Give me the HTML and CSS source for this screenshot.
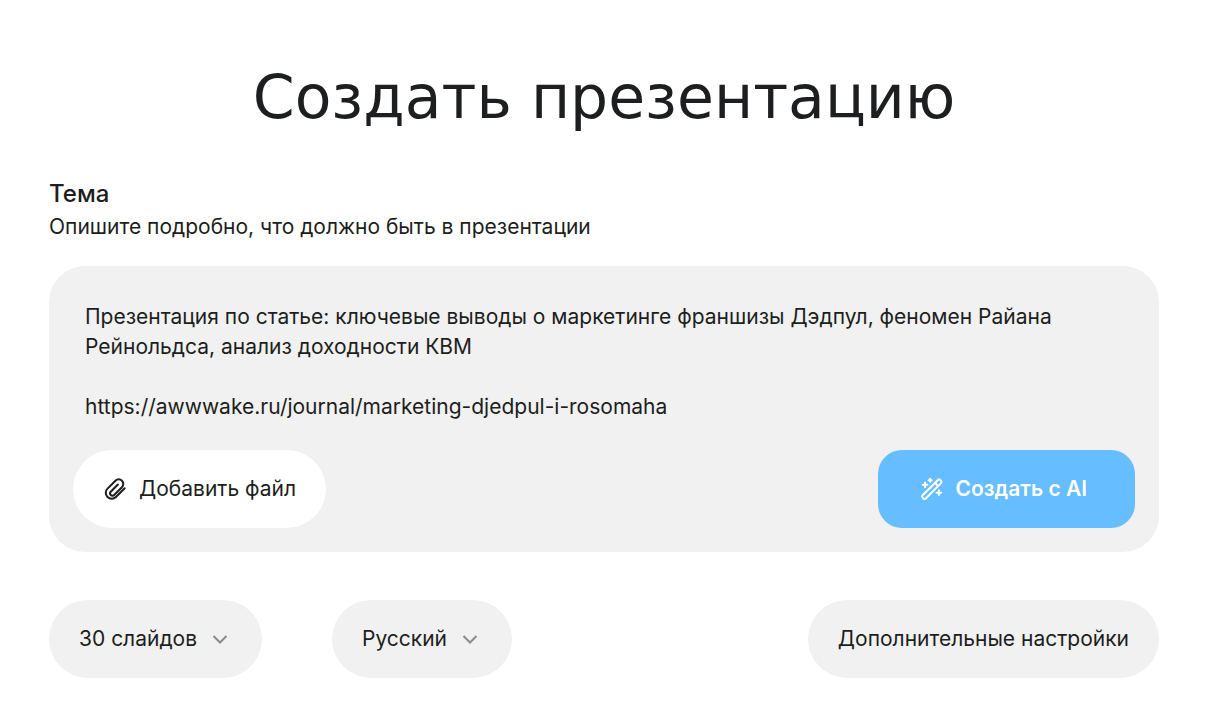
FILE: index.html
```html
<!DOCTYPE html>
<html lang="ru">
<head>
    <meta charset="UTF-8">
    <meta name="viewport" content="width=device-width, initial-scale=1.0">
    <title>Создать презентацию</title>
    <link rel="stylesheet" href="styles.css">
</head>
<body>
    <main class="page">
        <h1>Создать презентацию</h1>

        <form class="create-form">
            <label class="topic-label" for="topic">Тема</label>
            <p class="topic-hint" id="topic-hint">Опишите подробно, что должно быть в презентации</p>

            <div class="prompt">
                <textarea id="topic" name="topic" rows="4" aria-describedby="topic-hint" spellcheck="false">Презентация по статье: ключевые выводы о маркетинге франшизы Дэдпул, феномен Райана Рейнольдса, анализ доходности КВМ

https://awwwake.ru/journal/marketing-djedpul-i-rosomaha</textarea>
                <div class="prompt-actions">
                    <button type="button" class="btn btn-file">
                        <svg class="icon" viewBox="-1 -1 26 26" aria-hidden="true">
                            <path d="M22.5 11.2l-9.500 9.500a6.400 6.400 0 0 1-9.100 0 6.400 6.400 0 0 1 0-9.100l8.600-8.600a4.900 4.900 0 0 1 7 0 4.900 4.900 0 0 1 0 7l-8.500 8.500a2.500 2.500 0 0 1-3.600-3.600l7.700-7.700"/>
                        </svg>
                        Добавить файл
                    </button>
                    <button type="submit" class="btn btn-create">
                        <svg class="icon" viewBox="-1 -1 26 26" aria-hidden="true">
                            <path d="M1.8 18.8L18.400 2.200a1.700 1.700 0 0 1 2.400 0l1 1a1.700 1.700 0 0 1 0 2.400L5.200 22.200a1.700 1.700 0 0 1-2.400 0l-1-1a1.700 1.700 0 0 1 0-2.400z"/>
                            <path d="M15.400 5.600l3 3M4.500 5v5M2 7.500h5M10 .8v3.400M8.300 2.500h3.400M19.500 13.500v5M17 16h5"/>
                        </svg>
                        Создать с AI
                    </button>
                </div>
            </div>

            <div class="options">
                <div class="select">
                    <select name="slides" aria-label="Количество слайдов">
                        <option>30 слайдов</option>
                    </select>
                    <svg class="chevron" viewBox="0 0 16 16" aria-hidden="true"><path d="M1.500 5l6.500 6.500L14.500 5"/></svg>
                </div>
                <div class="select">
                    <select name="language" aria-label="Язык">
                        <option>Русский</option>
                    </select>
                    <svg class="chevron" viewBox="0 0 16 16" aria-hidden="true"><path d="M1.500 5l6.500 6.500L14.500 5"/></svg>
                </div>
                <button type="button" class="btn btn-settings">Дополнительные настройки</button>
            </div>
        </form>
    </main>
</body>
</html>
```
FILE: styles.css
```css
* {
    margin: 0;
    padding: 0;
    box-sizing: border-box;
}

body {
    font-family: 'Inter', sans-serif;
    font-size: 21px;
    line-height: 30px;
    color: #1d1e20;
    background: #fff;
}

.page {
    padding: 62px 53px 32px 49px;
}

h1 {
    margin-bottom: 46px;
    font-family: 'DejaVu Sans', sans-serif;
    font-size: 60px;
    line-height: 70px;
    font-weight: 400;
    text-align: center;
}

.topic-label {
    display: block;
    font-size: 24px;
    line-height: 32px;
    font-weight: 500;
}

.topic-hint {
    margin: 2px 0 24px;
}

.prompt {
    padding: 36px 24px 24px;
    background: #f1f1f1;
    border-radius: 36px;
}

.prompt textarea {
    display: block;
    width: 100%;
    height: 120px;
    margin-bottom: 28px;
    padding: 0 12px;
    border: none;
    outline: none;
    resize: none;
    background: transparent;
    font: inherit;
    color: inherit;
}

.prompt-actions {
    display: flex;
    justify-content: space-between;
}

.btn {
    display: flex;
    align-items: center;
    gap: 12px;
    height: 78px;
    padding: 0 30px;
    border: none;
    border-radius: 39px;
    font: inherit;
    color: inherit;
    cursor: pointer;
}

.btn-file {
    background: #fff;
}

.btn-create {
    padding: 0 48px 0 42px;
    border-radius: 24px;
    background: #66bdff;
    color: #fff;
    font-weight: 600;
}

.icon {
    width: 24px;
    height: 24px;
    fill: none;
    stroke: currentColor;
    stroke-width: 2.2;
    stroke-linecap: round;
    stroke-linejoin: round;
}

.options {
    display: flex;
    gap: 70px;
    margin-top: 48px;
}

.select {
    position: relative;
}

.select select {
    height: 78px;
    padding: 0 64px 0 30px;
    border: none;
    border-radius: 39px;
    appearance: none;
    background: #f1f1f1;
    font: inherit;
    color: inherit;
    cursor: pointer;
}

/* Arrow lies over the select and lets clicks through */
.chevron {
    position: absolute;
    top: 31px;
    right: 34px;
    width: 16px;
    height: 16px;
    fill: none;
    stroke: #8a8a8a;
    stroke-width: 2;
    pointer-events: none;
}

.btn-settings {
    margin-left: auto;
    background: #f1f1f1;
}
```
